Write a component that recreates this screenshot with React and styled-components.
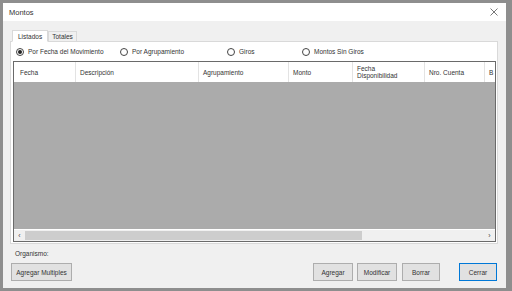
import React from "react";
import styled, { createGlobalStyle } from "styled-components";

const GlobalStyle = createGlobalStyle`
  html, body {
    margin: 0;
    padding: 0;
    background: #8e8e8e;
    font-family: "Liberation Sans", Arial, sans-serif;
    font-size: 6.5px;
    color: #333;
  }
`;

const Desktop = styled.div`
  width: 512px;
  height: 291px;
  padding: 3px 6px 3px 3px;
  box-sizing: border-box;
`;

const Window = styled.div`
  height: 100%;
  display: flex;
  flex-direction: column;
  background: #f0f0f0;
  box-sizing: border-box;
`;

const TitleBar = styled.div`
  height: 18px;
  background: #fff;
  display: flex;
  align-items: center;
  justify-content: space-between;
  padding: 0 8px 0 6px;
  font-size: 7.5px;
  color: #333;
`;

const Body = styled.div`
  flex: 1;
  display: flex;
  flex-direction: column;
  padding: 8px 8px 6px 7px;
`;

const TabStrip = styled.div`
  display: flex;
  align-items: flex-end;
  height: 12px;
  padding-left: 2px;
  position: relative;
  z-index: 1;
`;

const Tab = styled.div`
  height: ${(p) => (p.active ? "12px" : "10px")};
  padding: 0 ${(p) => (p.active ? "5px" : "3px")};
  background: ${(p) => (p.active ? "#fff" : "#f0f0f0")};
  border: 1px solid #d9d9d9;
  border-bottom: ${(p) => (p.active ? "1px solid #fff" : "none")};
  margin-bottom: ${(p) => (p.active ? "-1px" : "0")};
  display: flex;
  align-items: center;
  box-sizing: border-box;
`;

const Panel = styled.div`
  height: 203px;
  background: #fff;
  border: 1px solid #d9d9d9;
  display: flex;
  flex-direction: column;
  padding: 3px 1px 1px 2px;
  box-sizing: border-box;
`;

const RadioRow = styled.div`
  display: flex;
  align-items: center;
  height: 13px;
  padding-left: 3px;
  margin-bottom: 3px;
`;

const RadioItem = styled.label`
  display: flex;
  align-items: center;
  gap: 4px;
  width: ${(p) => p.w}px;
`;

const Circle = styled.span`
  width: 8px;
  height: 8px;
  border: 1px solid #444;
  border-radius: 50%;
  box-sizing: border-box;
  display: flex;
  align-items: center;
  justify-content: center;
  &::after {
    content: "";
    width: 4px;
    height: 4px;
    border-radius: 50%;
    background: ${(p) => (p.checked ? "#222" : "transparent")};
  }
`;

const Grid = styled.div`
  flex: 1;
  border: 1px solid #6a6a6a;
  display: flex;
  flex-direction: column;
  overflow: hidden;
`;

const Header = styled.div`
  height: 20px;
  display: flex;
  background: #fff;
  flex-shrink: 0;
`;

const HeadCell = styled.div`
  width: ${(p) => p.w}px;
  flex-shrink: 0;
  padding-left: ${(p) => p.pad || 4}px;
  border-right: 1px solid #e3e3e3;
  display: flex;
  align-items: center;
  line-height: 7px;
  box-sizing: border-box;
  white-space: pre;
  overflow: hidden;
`;

const GrayArea = styled.div`
  flex: 1;
  background: #ababab;
`;

const HScroll = styled.div`
  height: 11px;
  display: flex;
  align-items: center;
  background: #f0f0f0;
  border-top: 1px solid #fff;
  flex-shrink: 0;
`;

const Arrow = styled.span`
  width: 11px;
  text-align: center;
  font-size: 7px;
  color: #444;
`;

const Track = styled.div`
  flex: 1;
  height: 100%;
  display: flex;
  align-items: center;
`;

const Thumb = styled.div`
  width: 337px;
  height: 9px;
  background: #cdcdcd;
`;

const Label = styled.div`
  padding: 6px 0 0 5px;
  height: 13px;
`;

const ButtonRow = styled.div`
  display: flex;
  align-items: center;
  padding-left: 1px;
`;

const Button = styled.button`
  font-family: inherit;
  font-size: 6.5px;
  color: #333;
  height: 18px;
  width: ${(p) => p.w}px;
  margin-left: ${(p) => p.ml || 0}px;
  background: #e1e1e1;
  border: 1px solid ${(p) => (p.primary ? "#0078d7" : "#adadad")};
  padding: 0;
  box-sizing: border-box;
`;

const columns = [
  { name: "Fecha", w: 62, pad: 6 },
  { name: "Descripción", w: 123 },
  { name: "Agrupamiento", w: 90 },
  { name: "Monto", w: 64 },
  { name: "Fecha\nDisponibilidad", w: 72 },
  { name: "Nro. Cuenta", w: 60 },
  { name: "B", w: 20 },
];

const CloseIcon = () => (
  <svg width="8" height="8" viewBox="0 0 8 8">
    <path d="M0.5 0.5L7.5 7.5M7.5 0.5L0.5 7.5" stroke="#555" strokeWidth="0.8" />
  </svg>
);

export default function App() {
  return (
    <Desktop>
      <GlobalStyle />
      <Window>
        <TitleBar>
          Montos
          <CloseIcon />
        </TitleBar>
        <Body>
          <TabStrip>
            <Tab active>Listados</Tab>
            <Tab>Totales</Tab>
          </TabStrip>
          <Panel>
            <RadioRow>
              <RadioItem w={104}>
                <Circle checked />
                Por Fecha del Movimiento
              </RadioItem>
              <RadioItem w={107}>
                <Circle />
                Por Agrupamiento
              </RadioItem>
              <RadioItem w={75}>
                <Circle />
                Giros
              </RadioItem>
              <RadioItem w={90}>
                <Circle />
                Montos Sin Giros
              </RadioItem>
            </RadioRow>
            <Grid>
              <Header>
                {columns.map((c) => (
                  <HeadCell key={c.name} w={c.w} pad={c.pad}>
                    {c.name}
                  </HeadCell>
                ))}
              </Header>
              <GrayArea />
              <HScroll>
                <Arrow>‹</Arrow>
                <Track>
                  <Thumb />
                </Track>
                <Arrow>›</Arrow>
              </HScroll>
            </Grid>
          </Panel>
          <Label>Organismo:</Label>
          <ButtonRow>
            <Button w={61}>Agregar Multiples</Button>
            <Button w={40} ml={241}>Agregar</Button>
            <Button w={40} ml={4}>Modificar</Button>
            <Button w={38} ml={5}>Borrar</Button>
            <Button w={38} ml={19} primary>Cerrar</Button>
          </ButtonRow>
        </Body>
      </Window>
    </Desktop>
  );
}
